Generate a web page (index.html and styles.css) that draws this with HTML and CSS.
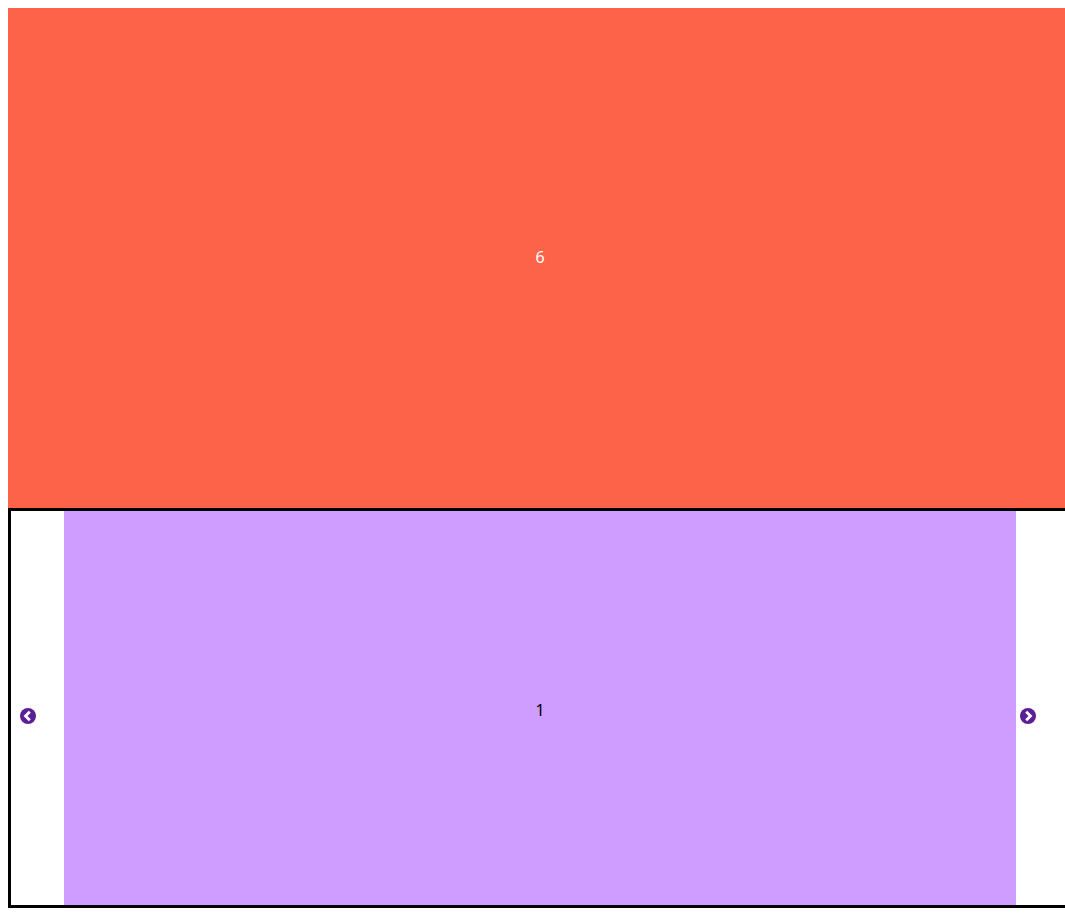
FILE: index.html
```html
<!DOCTYPE html>
<html lang="en">
<head>
<meta charset="UTF-8">
<title>Carousel</title>
<link rel="stylesheet" href="styles.css">
</head>
<body>

<div class="page">
  <div class="banner">6</div>

  <div class="carousel">
    <div class="arrowCol arrowColLeft">
      <svg class="arrow" viewBox="0 0 16 16" aria-label="Previous">
        <circle cx="8" cy="8" r="8" fill="#5b1e94"/>
        <path d="M9.8 3.7 5.5 8l4.3 4.3" fill="none" stroke="#fff" stroke-width="2.8"/>
      </svg>
    </div>
    <div class="slide">1</div>
    <div class="arrowCol arrowColRight">
      <svg class="arrow" viewBox="0 0 16 16" aria-label="Next">
        <circle cx="8" cy="8" r="8" fill="#5b1e94"/>
        <path d="M6.2 3.7 10.5 8l-4.3 4.3" fill="none" stroke="#fff" stroke-width="2.8"/>
      </svg>
    </div>
  </div>
</div>

</body>
</html>
```

FILE: styles.css
```css
body {
  font-family: "Noto Sans", sans-serif;
  font-size: 16px;
  margin: 8px 0 8px 8px;
  background-color: #fff;
  color: #000;
}
.page {
  width: 1064px;
}
.banner {
  height: 500px;
  padding-bottom: 2px;
  box-sizing: border-box;
  display: flex;
  align-items: center;
  justify-content: center;
  background-color: #fd6349;
  color: #fff;
}
.carousel {
  height: 400px;
  box-sizing: border-box;
  display: flex;
  border: 3px solid #000;
}
.arrowCol {
  width: 53px;
  padding-top: 16px;
  box-sizing: border-box;
  display: flex;
  align-items: center;
}
.arrowColLeft {
  padding-left: 9px;
}
.arrowColRight {
  padding-left: 4px;
}
.arrow {
  width: 16px;
  height: 16px;
  display: block;
}
.slide {
  flex: 1;
  padding-top: 4px;
  box-sizing: border-box;
  display: flex;
  align-items: center;
  justify-content: center;
  background-color: #cf9cff;
}
```
